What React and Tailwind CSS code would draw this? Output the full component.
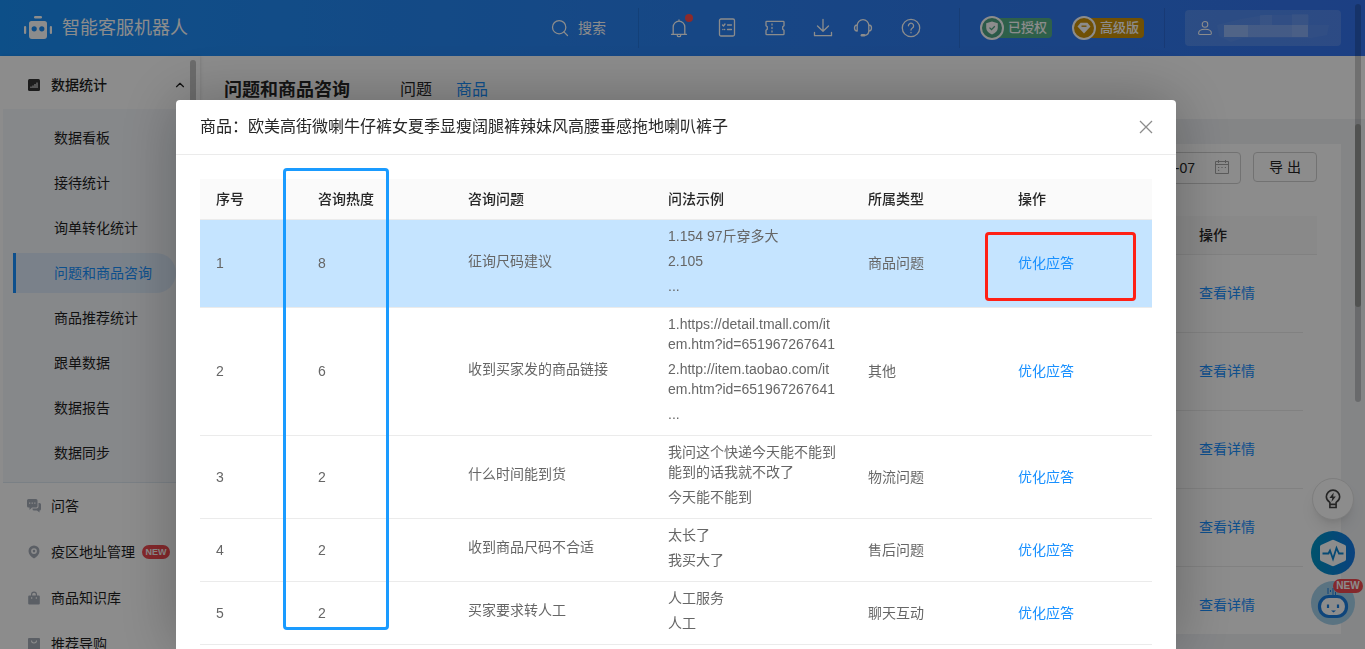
import { useState } from "react";
import { Search, ChevronUp } from "lucide-react";

const subMenus = [
    "数据看板",
    "接待统计",
    "询单转化统计",
    "问题和商品咨询",
    "商品推荐统计",
    "跟单数据",
    "数据报告",
    "数据同步",
];

const rows = [
    { heat: 8, question: "征询尺码建议", examples: ["1.154 97斤穿多大", "2.105", "..."], type: "商品问题" },
    {
        heat: 6,
        question: "收到买家发的商品链接",
        examples: [
            "1.https://detail.tmall.com/item.htm?id=651967267641",
            "2.http://item.taobao.com/item.htm?id=651967267641",
            "...",
        ],
        type: "其他",
    },
    { heat: 2, question: "什么时间能到货", examples: ["我问这个快递今天能不能到能到的话我就不改了", "今天能不能到"], type: "物流问题" },
    { heat: 2, question: "收到商品尺码不合适", examples: ["太长了", "我买大了"], type: "售后问题" },
    { heat: 2, question: "买家要求转人工", examples: ["人工服务", "人工"], type: "聊天互动" },
];

function Icon({ children, className = "w-5 h-5" }) {
    return (
        <svg viewBox="0 0 20 20" className={className} fill="none" stroke="currentColor" strokeWidth="1.3" strokeLinecap="round" strokeLinejoin="round">
            {children}
        </svg>
    );
}

function Logo() {
    return (
        <svg viewBox="0 0 28 24" className="w-7 h-6 shrink-0" fill="white">
            <rect x="10" y="0" width="8" height="2.400" rx="1.200" />
            <path d="M7.500 5h13a2.500 2.500 0 0 1 2.500 2.500v12.500a3 3 0 0 1-3 3h-12a3 3 0 0 1-3-3V7.500A2.500 2.500 0 0 1 7.500 5Z" />
            <rect x="0" y="10" width="2.200" height="8" rx="1.100" />
            <rect x="25.800" y="10" width="2.200" height="8" rx="1.100" />
            <circle cx="10.200" cy="12.800" r="2.600" fill="#1b8cf5" />
            <circle cx="17.800" cy="12.800" r="2.600" fill="#1b8cf5" />
        </svg>
    );
}

function Divider() {
    return <span className="w-px h-10 bg-black/10" />;
}

function TopBar() {
    return (
        <header className="h-14 shrink-0 flex items-center px-6 text-white bg-linear-to-r from-[#1990f8] to-[#3474ee]">
            <Logo />
            <span className="ml-2.5 text-lg">智能客服机器人</span>

            <div className="ml-auto flex items-center">
                <button className="flex items-center gap-2 text-sm">
                    <Search className="w-5 h-5" strokeWidth={1.5} />
                    搜索
                </button>
                <span className="w-8" />
                <Divider />
                <div className="flex items-center gap-7 ml-[30px]">
                    <button aria-label="通知" className="relative">
                        <Icon>
                            <path d="M2.500 16.300h15M4.200 16V9a5.800 5.800 0 0 1 11.600 0v7M10 3.200V2M8.300 17.500a1.700 1.200 0 0 0 3.400 0" />
                        </Icon>
                        <span className="absolute -top-1 -right-1 w-2 h-2 rounded-full bg-[#ff4d4f]" />
                    </button>
                    <button aria-label="任务">
                        <Icon>
                            <rect x="2.500" y="1" width="15" height="17" rx="1.500" />
                            <path d="M5.500 7l1 1 1.500-2M10.500 7h4M10.500 11.500h4M5.800 11.500h.2M7.500 11.500h.2" />
                        </Icon>
                    </button>
                    <button aria-label="卡券">
                        <Icon>
                            <path d="M1.800 3.300h16.400a.8.8 0 0 1 .8.8v3.700l-1.300 1v2.400l1.300 1v3.700a.8.8 0 0 1-.8.8H1.800a.8.8 0 0 1-.8-.8v-3.700l1.300-1V8.800L1 7.800V4.100a.8.8 0 0 1 .8-.8Z" />
                            <path d="M7 6v1M7 9.500v1M7 13v1" />
                        </Icon>
                    </button>
                    <div className="flex items-center gap-5">
                        <button aria-label="下载">
                            <Icon>
                                <path d="M10 1.500v11.500M4.500 8l5.500 5.300L15.500 8M1.500 14.500v3.200h17v-3.200" />
                            </Icon>
                        </button>
                        <button aria-label="客服">
                            <Icon>
                                <path d="M4.200 7.500a5.800 5.800 0 0 1 11.600 0v5.300c0 2.500-1.500 4.300-4 4.500M4.200 7C2.500 7 1.500 7.800 1.500 10s1 3 2.700 3ZM15.800 7c1.700 0 2.700.8 2.700 3s-1 3-2.700 3Z" />
                                <path d="M8.800 17.300h2.400" strokeWidth="2.400" />
                            </Icon>
                        </button>
                    </div>
                    <button aria-label="帮助">
                        <Icon>
                            <circle cx="10" cy="10" r="8.700" />
                            <path d="M7.400 7.800a2.600 2.600 0 1 1 4 2.200c-.9.600-1.400 1-1.400 2M10 14.500v.3" />
                        </Icon>
                    </button>
                </div>
                <span className="w-[38px]" />
                <Divider />
                <div className="flex items-center gap-5 mx-5">
                    <div className="flex items-center">
                        <span className="z-10 w-6 h-6 rounded-full border-2 border-white bg-[#4fa584] flex items-center justify-center">
                            <svg viewBox="0 0 14 14" className="w-3.5 h-3.5">
                                <path d="M7 .5l5.800 1.800v4.500c0 3-2.300 5.400-5.800 6.700C3.500 12.200 1.200 9.800 1.200 6.800V2.300Z" fill="white" />
                                <path d="M4.500 6.600l2 2 3.300-3.400" fill="none" stroke="#4fa584" strokeWidth="1.300" />
                            </svg>
                        </span>
                        <span className="-ml-2 w-14 h-5 pl-3 rounded-r bg-[#55b088] text-[13px] leading-5 font-medium whitespace-nowrap">已授权</span>
                    </div>
                    <div className="flex items-center">
                        <span className="z-10 w-6 h-6 rounded-full border-2 border-white bg-[#cd9208] flex items-center justify-center">
                            <svg viewBox="0 0 14 14" className="w-3.5 h-3.5">
                                <path d="M3.600 1.800h6.800L13.500 5.500 7 12.500.5 5.500Z" fill="white" />
                                <path d="M4.500 5.200h5" fill="none" stroke="#cd9208" strokeWidth="1.400" />
                            </svg>
                        </span>
                        <span className="-ml-2 w-14 h-5 pl-3 rounded-r bg-[#cd9208] text-[13px] leading-5 font-medium whitespace-nowrap">高级版</span>
                    </div>
                </div>
                <Divider />
                <button aria-label="账号" className="ml-5 w-[156px] h-9 pl-3 rounded bg-white/15 flex items-center">
                    <Icon className="w-4 h-4">
                        <circle cx="10" cy="5.500" r="3.500" />
                        <path d="M2 16.500c0-3.500 3-5 8-5s8 1.500 8 5c0 1-.5 1.500-1.500 1.500h-13c-1 0-1.500-.5-1.500-1.500Z" />
                    </Icon>
                    <svg viewBox="0 0 116 28" className="w-[116px] h-7 ml-1">
                        <path d="M0 11L24 5 48 1h44v10h20l-2 10-16 3H26L14 28 2 22Z" fill="#ffffff" opacity=".05" />
                        <path d="M7 11h24v12H7z" fill="#ffffff" opacity=".35" />
                        <path d="M31 11h60v12H31z" fill="#ffffff" opacity=".22" />
                        <path d="M43 1h12v10H43zM75 0h16v23H75z" fill="#ffffff" opacity=".08" />
                    </svg>
                </button>
            </div>
        </header>
    );
}

function SideItem({ icon, children }) {
    return (
        <a href="#" className="h-[46px] pl-[27px] flex items-center gap-2.5">
            <svg viewBox="0 0 14 14" className="w-3.5 h-3.5 shrink-0" fill="#a6adb9">{icon}</svg>
            {children}
        </a>
    );
}

function Sidebar() {
    return (
        <aside className="relative w-[200px] shrink-0 overflow-hidden bg-white text-sm text-[#1f1f1f] shadow-[1px_0_3px_rgba(0,0,0,0.1)]">
            <button className="w-full h-[53px] pt-1 pl-7 pr-[13px] flex items-center font-medium">
                <svg viewBox="0 0 12 12" className="w-3 h-3 mr-[11px]">
                    <rect width="12" height="12" rx="1.500" fill="#333" />
                    <path d="M3 9V7.500M5 9V6.500M7 9V5M9 9V3.500" stroke="white" strokeWidth="1" />
                </svg>
                数据统计
                <ChevronUp className="w-3.5 h-3.5 ml-auto" strokeWidth={2} />
            </button>
            <nav className="ml-[3px] py-[9px] flex flex-col gap-[5px] bg-[#f5f8fc] border-b border-[#dfe9f2]">
                {subMenus.map((m) => (
                    <a
                        key={m}
                        href="#"
                        className={
                            m === "问题和商品咨询"
                                ? "ml-2.5 mr-6 h-10 pl-[38px] flex items-center rounded-r-full border-l-3 border-[#1890ff] bg-[#deecfc] text-[#1890ff]"
                                : "ml-2.5 mr-6 h-10 pl-[41px] flex items-center"
                        }
                    >
                        {m}
                    </a>
                ))}
            </nav>
            <SideItem icon={<path d="M1.500 0h7.500a1.500 1.500 0 0 1 1.500 1.500V7A1.500 1.500 0 0 1 9 8.500H5L2.500 11V8.500h-1A1.500 1.500 0 0 1 0 7V1.500A1.500 1.500 0 0 1 1.500 0ZM2 3.500v1.300h1.300V3.500Zm2.600 0v1.300h1.300V3.500Zm2.600 0v1.300h1.300V3.500ZM11.500 4H12.500A1.500 1.500 0 0 1 14 5.500V10a1.500 1.500 0 0 1-1.500 1.500V13.500L10 11.500H7a1.500 1.500 0 0 1-1.500-1.500V9.500H9.500a2 2 0 0 0 2-2Z" fillRule="evenodd" />}>
                问答
            </SideItem>
            <SideItem icon={<path d="M7 .5a5.500 5.500 0 0 1 5.500 5.500c0 3-2.300 5.500-5.500 7.500C3.800 11.500 1.500 9 1.500 6A5.500 5.500 0 0 1 7 .5Zm0 2.700a2.900 2.900 0 1 0 0 5.800 2.900 2.900 0 0 0 0-5.800Zm0 1.600a1.300 1.300 0 1 1 0 2.600 1.300 1.300 0 0 1 0-2.600Z" fillRule="evenodd" />}>
                疫区地址管理
                <span className="-ml-[3px] w-7 h-3.5 rounded-full bg-[#f14a50] text-white text-[9px] leading-3.5 font-bold text-center">NEW</span>
            </SideItem>
            <SideItem icon={<path d="M4 4.500V3.500a3 3 0 0 1 6 0v1h1.800a1 1 0 0 1 1 1V12.500a1 1 0 0 1-1 1H2.200a1 1 0 0 1-1-1V5.500a1 1 0 0 1 1-1Zm1.200 0h3.600v-1a1.800 1.800 0 0 0-3.600 0ZM4.300 6v2h.9V6Zm4.500 0v2h.9V6Z" fillRule="evenodd" />}>
                商品知识库
            </SideItem>
            <SideItem icon={<path d="M2 1h10a1 1 0 0 1 1 1v10a1 1 0 0 1-1 1H2a1 1 0 0 1-1-1V2a1 1 0 0 1 1-1ZM4 3.500a3 3 0 0 0 6 0H9a2 2 0 0 1-4 0Z" fillRule="evenodd" />}>
                推荐导购
            </SideItem>
            {/* scroll thumb */}
            <span className="absolute top-1 right-1 w-1.5 h-80 rounded-full bg-[#c4c4c4]" />
        </aside>
    );
}

function Content() {
    const [date, setDate] = useState("-07");
    return (
        <main className="flex-1 min-w-0 flex flex-col bg-[#f0f2f5]">
            <div className="h-[63px] shrink-0 px-6 pt-1 flex items-center bg-white text-base text-[#262626]">
                <h1 className="text-lg font-bold mr-[50px]">问题和商品咨询</h1>
                <div className="flex gap-6">
                    <button>问题</button>
                    <button className="text-[#1890ff]">商品</button>
                </div>
            </div>
            <section className="flex-1 min-h-0 overflow-hidden mt-[25px] mx-6 mb-[15px] px-6 pt-2 bg-white text-sm text-[#262626]">
                <div className="flex justify-end items-start gap-3">
                    <label className="relative">
                        <input
                            aria-label="日期"
                            value={date}
                            onChange={(e) => setDate(e.target.value)}
                            className="w-60 h-8 pr-[45px] text-right rounded border border-[#d0d0d0]"
                        />
                        <svg viewBox="0 0 14 14" className="absolute right-3 top-2 w-3.5 h-3.5 overflow-visible" fill="none" stroke="#a6a6a6">
                            <path d="M.5 1.500h13v12H.5ZM.5 4.500h13M3.500 0v3M10.500 0v3" />
                            <path d="M3 7.500h1.200M6.400 7.500h1.200M9.800 7.500H11M3 10.300h1.200" strokeWidth="1.200" />
                        </svg>
                    </label>
                    <button className="w-16 h-[30px] rounded border border-[#d0d0d0] flex items-center justify-center gap-1">
                        <span>导</span>
                        <span>出</span>
                    </button>
                </div>
                <table className="mt-8 w-full table-fixed text-left">
                    <colgroup>
                        <col />
                        <col className="w-[120px]" />
                        <col className="w-3.5" />
                    </colgroup>
                    <thead>
                        <tr className="h-[38px] bg-[#fafafa] border-b border-[#ebebeb]">
                            <td></td>
                            <th className="px-4 font-medium">操作</th>
                            <td></td>
                        </tr>
                    </thead>
                    <tbody>
                        {rows.map((r, i) => (
                            <tr key={i} className="h-[78px]">
                                <td className="border-b border-[#ebebeb]"></td>
                                <td className="px-4 border-b border-[#ebebeb]">
                                    <a href="#" className="text-[#1890ff]">查看详情</a>
                                </td>
                                <td></td>
                            </tr>
                        ))}
                    </tbody>
                </table>
            </section>
        </main>
    );
}

function FloatButtons() {
    return (
        <div className="absolute right-2.5 bottom-6 flex flex-col items-center">
            <button aria-label="建议" className="w-[42px] h-[42px] mb-[11px] rounded-full bg-white border border-[#e4e4e4] shadow-lg flex items-center justify-center text-[#444]">
                <svg viewBox="0 0 18 22" className="w-4 h-5" fill="none" stroke="currentColor" strokeWidth="1.800">
                    <path d="M5.500 17v-2.200C3 13.300 1.500 11.200 1.500 8.500a7.500 7.500 0 0 1 15 0c0 2.700-1.500 4.800-4 6.300V17ZM5.500 17v3.500h7V17" />
                    <path d="M9.800 3.800L5 9.800h3.200l-1 4.500 5-6H9.200Z" fill="currentColor" stroke="none" />
                </svg>
            </button>
            <button aria-label="诊断" className="w-11 h-11 mb-1.5 rounded-full bg-linear-to-r from-[#0396c4] to-[#1678e6] flex items-center justify-center">
                <svg viewBox="0 0 28 28" className="w-7 h-7">
                    <path d="M12.500 1.300a3 3 0 0 1 3 0L26 6a2 2 0 0 1 1 1.800v12.400A2 2 0 0 1 26 22l-10.500 4.700a3 3 0 0 1-3 0L2 22a2 2 0 0 1-1-1.800V7.800A2 2 0 0 1 2 6Z" fill="white" />
                    <path d="M3.500 14.500h6l1.500-3 3 8.500 3.500-11 2.500 5.500h4.500" fill="none" stroke="#0b87d6" strokeWidth="1.800" />
                </svg>
            </button>
            <button aria-label="机器人" className="relative w-11 h-11 rounded-full bg-[#a4d1ec]">
                <svg viewBox="0 0 44 44" className="w-11 h-11">
                    <path d="M17 7v6M19.500 9v2M22 7v7M24.500 11v3M17 14.500h10" stroke="#1a7fe0" strokeWidth="1" />
                    <rect x="8.500" y="15.500" width="27" height="20" rx="9.500" fill="white" stroke="#1a7fe0" strokeWidth="3.200" />
                    <path d="M17 23.500v3.500M27 23.500v3.500" stroke="#1a7fe0" strokeWidth="2.200" />
                    <path d="M20 29.500h5l-2.500 2Z" fill="#1a7fe0" />
                </svg>
                <span className="absolute -top-0.5 -right-2 w-[30px] h-3.5 rounded-full bg-[#f14a50] text-white text-[10px] leading-3.5 font-bold text-center">NEW</span>
            </button>
        </div>
    );
}

function DetailModal({ onClose }) {
    return (
        <div role="dialog" className="w-[1000px] min-h-full rounded-t bg-white shadow-[0_0_60px_rgba(0,0,0,0.28)]">
            <div className="px-6 py-4 flex items-center justify-between border-b border-[#ebebeb]">
                <h2 className="text-base leading-[22px] text-[#262626]">商品：欧美高街微喇牛仔裤女夏季显瘦阔腿裤辣妹风高腰垂感拖地喇叭裤子</h2>
                <button aria-label="关闭" onClick={onClose} className="text-[#8c8c8c]">
                    <svg viewBox="0 0 12 12" className="w-3 h-3" stroke="currentColor" strokeWidth="1.300" overflow="visible">
                        <path d="M0 0l12 12M12 0L0 12" />
                    </svg>
                </button>
            </div>
            <div className="relative m-6">
                <table className="w-full table-fixed text-left text-sm leading-5 text-[#666]">
                    <colgroup>
                        <col />
                        <col className="w-[150px]" />
                        <col className="w-[200px]" />
                        <col className="w-[200px]" />
                        <col className="w-[150px]" />
                        <col className="w-[150px]" />
                    </colgroup>
                    <thead>
                        <tr className="h-10 bg-[#fafafa] border-b border-[#ebebeb] text-[#262626]">
                            {["序号", "咨询热度", "咨询问题", "问法示例", "所属类型", "操作"].map((h) => (
                                <th key={h} className="px-4 font-medium">{h}</th>
                            ))}
                        </tr>
                    </thead>
                    <tbody>
                        {rows.map((r, i) => (
                            <tr key={i} className={i === 0 ? "bg-[#c5e4ff] border-b border-[#ebebeb]" : "border-b border-[#ebebeb]"}>
                                <td className="px-4">{i + 1}</td>
                                <td className="px-4">{r.heat}</td>
                                <td className="px-4">
                                    <p className="mb-[5px]">{r.question}</p>
                                </td>
                                <td className="px-4 py-1.5">
                                    {r.examples.map((e) => (
                                        <p key={e} className="mb-[5px] break-all">{e}</p>
                                    ))}
                                </td>
                                <td className="px-4">{r.type}</td>
                                <td className="px-4 relative">
                                    <a href="#" className="text-[#1890ff]">优化应答</a>
                                    {i === 0 && (
                                        <span className="absolute -left-[17px] top-3 w-[151px] h-[69px] border-3 border-[#ff2015] rounded pointer-events-none" />
                                    )}
                                </td>
                            </tr>
                        ))}
                    </tbody>
                </table>
                <span className="absolute left-[83px] -top-[11px] w-[106px] h-[462px] border-3 border-[#1a9bff] rounded pointer-events-none" />
            </div>
        </div>
    );
}

export default function App() {
    const [open, setOpen] = useState(true);

    return (
        <div className="relative h-screen overflow-hidden flex flex-col font-['Liberation_Sans','Noto_Sans_CJK_SC',sans-serif]">
            <TopBar />
            <div className="flex-1 min-h-0 flex">
                <Sidebar />
                <Content />
            </div>
            <span className="absolute right-1 top-[124px] w-1.5 h-[183px] rounded-full bg-[#b9bcb9]" />
            <FloatButtons />
            {open && (
                <div className="fixed inset-0 z-50 overflow-hidden bg-black/45">
                    <div className="pt-[100px] pr-[13px] h-full flex justify-center">
                        <DetailModal onClose={() => setOpen(false)} />
                    </div>
                    <span className="absolute right-1 top-1 w-1.5 h-[398px] rounded-full bg-black/20" />
                </div>
            )}
        </div>
    );
}
